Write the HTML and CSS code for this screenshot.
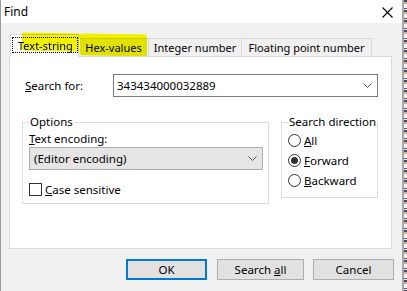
FILE: index.html
```html
<!DOCTYPE html>
<html lang="en">
<head>
    <meta charset="UTF-8">
    <title>Find</title>
    <link rel="stylesheet" href="styles.css">
</head>
<body>
    <div class="screen">
        <div class="window">
            <div class="titlebar">
                <span class="title">Find</span>
                <svg class="close" width="11" height="11" viewBox="0 0 11 11">
                    <path d="M0.5 0.5 L10.5 10.5 M10.5 0.5 L0.5 10.5" stroke="#000" stroke-width="1.1" fill="none"/>
                </svg>
            </div>
            <div class="dialog">
                <div class="tabs">
                    <div class="tab active tab-text">
                        <span class="focus">Text-string</span>
                        <span class="mark mark-a"></span>
                    </div>
                    <div class="tab tab-hex">
                        Hex-values
                        <span class="mark mark-b"></span>
                    </div>
                    <div class="tab tab-int">Integer number</div>
                    <div class="tab tab-float">Floating point number</div>
                </div>
                <div class="panel">
                    <div class="search-row">
                        <label class="search-label"><u>S</u>earch for:</label>
                        <div class="combo">
                            <span>343434000032889</span>
                            <svg class="chevron" width="9" height="5" viewBox="0 0 9 5"><path d="M0.5 0.5 L4.5 4.5 L8.5 0.5" stroke="#555" fill="none"/></svg>
                        </div>
                    </div>
                    <div class="groups">
                        <fieldset class="group options">
                            <legend>Options</legend>
                            <div class="field-label"><u>T</u>ext encoding:</div>
                            <div class="select">
                                <span>(Editor encoding)</span>
                                <svg class="chevron" width="9" height="5" viewBox="0 0 9 5"><path d="M0.5 0.5 L4.5 4.5 L8.5 0.5" stroke="#555" fill="none"/></svg>
                            </div>
                            <div class="check-row">
                                <span class="checkbox"></span>
                                <span><u>C</u>ase sensitive</span>
                            </div>
                        </fieldset>
                        <fieldset class="group direction">
                            <legend>Search direction</legend>
                            <div class="radio-row"><span class="radio"></span><span><u>A</u>ll</span></div>
                            <div class="radio-row"><span class="radio checked"></span><span><u>F</u>orward</span></div>
                            <div class="radio-row"><span class="radio"></span><span><u>B</u>ackward</span></div>
                        </fieldset>
                    </div>
                </div>
                <div class="buttons">
                    <button class="btn default">OK</button>
                    <button class="btn wide">Search <u>a</u>ll</button>
                    <button class="btn">Cancel</button>
                </div>
            </div>
        </div>
        <div class="strip"></div>
    </div>
</body>
</html>
```

FILE: styles.css
```css
* {
    margin: 0;
    padding: 0;
    box-sizing: border-box;
}

body {
    font-family: 'Noto Sans', sans-serif;
    font-size: 11.5px;
    color: #000;
    width: 407px;
    height: 291px;
    overflow: hidden;
    background: #f0f0f0;
}

u {
    text-decoration: underline;
    text-underline-offset: 1px;
}

.screen {
    display: flex;
    height: 291px;
}

.window {
    width: 402px;
    height: 291px;
    border-left: 1px solid #9a9a9a;
    display: flex;
    flex-direction: column;
}

.titlebar {
    height: 23px;
    background: #fff;
    display: flex;
    align-items: center;
    justify-content: space-between;
    padding: 0 9px 0 3px;
}

.title {
    font-size: 12px;
}

.close {
    margin-top: 1px;
}

.dialog {
    flex: 1;
    background: #f0f0f0;
    padding: 10px 10px 0 8px;
}

/* tabs */

.tabs {
    display: flex;
    align-items: flex-end;
    height: 23px;
    margin-left: 1px;
    position: relative;
    z-index: 1;
    font-size: 11px;
}

.tab {
    position: relative;
    height: 18px;
    border: 1px solid #d9d9d9;
    border-bottom: none;
    border-left: none;
    background: #f0f0f0;
    display: flex;
    align-items: center;
    justify-content: center;
    white-space: nowrap;
}

.tab.active {
    height: 23px;
    margin-bottom: -1px;
    background: #fff;
    border-left: 1px solid #d9d9d9;
    align-items: flex-start;
    padding: 2px 0 0 1px;
}

.tab-text { width: 69px; }
.tab-hex { width: 70px; }
.tab-int { width: 93px; }
.tab-float { width: 130px; }

.focus {
    flex: 1;
    height: 16px;
    border: 1px dotted #000;
    display: flex;
    align-items: center;
    padding-left: 5px;
}

.mark {
    position: absolute;
    background: #f0f000;
    mix-blend-mode: multiply;
    border-radius: 2px;
}

.mark-a {
    left: 11px;
    top: -2px;
    width: 58px;
    height: 18px;
    transform: skewY(1deg);
}

.mark-b {
    left: 1px;
    top: -5px;
    width: 67px;
    height: 22px;
    transform: skewY(1deg);
}

/* page */

.panel {
    height: 193px;
    background: #fff;
    border: 1px solid #d9d9d9;
    padding: 17px 13px 0 12px;
}

.search-row {
    display: flex;
    align-items: center;
    padding-left: 3px;
}

.search-label {
    width: 88px;
}

.combo {
    flex: 1;
    height: 23px;
    border: 1px solid #7a7a7a;
    display: flex;
    align-items: center;
    justify-content: space-between;
    padding: 0 5px 0 3px;
}

.groups {
    display: flex;
    justify-content: space-between;
    align-items: flex-start;
    margin-top: 17px;
}

.group {
    border: 1px solid #dcdcdc;
    min-width: 0;
}

.group legend {
    padding: 0 1px;
    line-height: 16px;
    white-space: nowrap;
}

.options {
    width: 247px;
    padding: 0 5px 7px 6px;
}

.field-label {
    line-height: 16px;
    margin-top: 1px;
}

.select {
    height: 23px;
    background: #e5e5e5;
    border: 1px solid #adadad;
    display: flex;
    align-items: center;
    justify-content: space-between;
    padding: 0 5px 0 4px;
}

.check-row {
    display: flex;
    align-items: center;
    gap: 3px;
    margin-top: 12px;
    height: 14px;
}

.checkbox {
    width: 13px;
    height: 13px;
    border: 1px solid #333;
    background: #fff;
}

.direction {
    width: 97px;
    padding: 0 2px 7px 6px;
}

.radio-row {
    display: flex;
    align-items: center;
    gap: 3px;
    height: 20px;
}

.radio {
    width: 13px;
    height: 13px;
    border: 1px solid #333;
    border-radius: 50%;
    background: #fff;
    display: flex;
    align-items: center;
    justify-content: center;
}

.radio.checked::after {
    content: '';
    width: 7px;
    height: 7px;
    border-radius: 50%;
    background: #333;
}

/* buttons */

.buttons {
    display: flex;
    justify-content: flex-end;
    gap: 10px;
    margin: 10px -2px 0 0;
}

.btn {
    font-family: inherit;
    font-size: 11.5px;
    color: #000;
    width: 81px;
    height: 21px;
    background: #e1e1e1;
    border: 1px solid #adadad;
}

.btn.default {
    border: 2px solid #0078d7;
}

.btn.wide {
    width: 87px;
    margin-right: -1px;
}

.strip {
    flex: 1;
    border-left: 2px solid #a8a8a8;
    background: repeating-linear-gradient(180deg, #4a4a60 0 2px, #c8b0a0 2px 4px, #f0f0f0 4px 8px, #6a5060 8px 9px, #f0f0f0 9px 10px);
}
```
